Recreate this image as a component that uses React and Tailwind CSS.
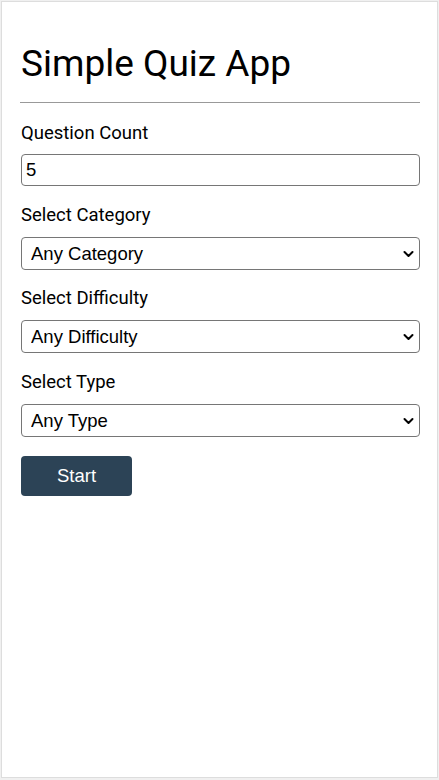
function Chevron() {
  return (
    <svg
      className="absolute right-[6px] top-1/2 -translate-y-1/2 pointer-events-none"
      width="11"
      height="7"
      viewBox="0 0 11 7"
      fill="none"
    >
      <polyline points="1.5,1.5 5.5,5.5 9.5,1.5" stroke="#000" strokeWidth="2" strokeLinecap="round" strokeLinejoin="round" />
    </svg>
  );
}

function SelectField({ labelText, value, className }) {
  return (
    <div className={className}>
      <label className="block text-[18.5px] leading-[21px] text-black">{labelText}</label>
      <div className="relative mt-[11px]">
        <select
          className="block w-full h-[33px] appearance-none border border-[#767676] rounded-[4px] bg-white text-[18.5px] text-black pl-[9px] pr-[24px]"
          style={{ fontFamily: '"Liberation Sans", Arial, sans-serif' }}
        >
          <option>{value}</option>
        </select>
        <Chevron />
      </div>
    </div>
  );
}

export default function App() {
  return (
    <div className="bg-[#f0f0f0] h-[780px] pt-px px-px" style={{ fontFamily: "Roboto, sans-serif" }}>
      <div className="bg-white border border-[#dddddd] h-[777px] pl-[19px] pr-[17px] pt-[40px]">
        <h1 className="text-[37px] leading-[43px] font-normal text-black">Simple Quiz App</h1>
        <hr className="mt-[17px] -ml-px border-t border-[#999999]" />
        <div className="mt-[20px]">
          <label className="block text-[18.5px] leading-[21px] text-black">Question Count</label>
          <input
            type="number"
            defaultValue={5}
            className="block mt-[10px] w-full h-[32px] border border-[#767676] rounded-[4px] bg-white text-[18.5px] text-black px-[4px]"
            style={{ fontFamily: '"Liberation Sans", Arial, sans-serif' }}
          />
        </div>
        <SelectField className="mt-[19px]" labelText="Select Category" value="Any Category" />
        <SelectField className="mt-[18px]" labelText="Select Difficulty" value="Any Difficulty" />
        <SelectField className="mt-[19px]" labelText="Select Type" value="Any Type" />
        <button
          className="mt-[19px] w-[111px] h-[40px] rounded-[4px] bg-[#2c4356] text-white text-[18.5px]"
          style={{ fontFamily: '"Liberation Sans", Arial, sans-serif' }}
        >
          Start
        </button>
      </div>
    </div>
  );
}
